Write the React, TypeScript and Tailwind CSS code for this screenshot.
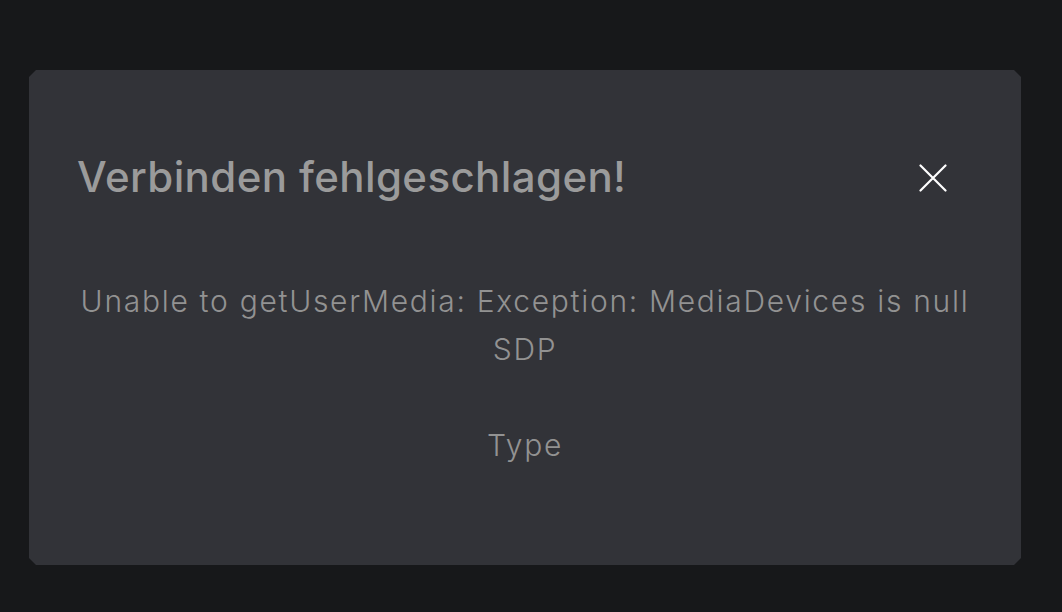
export default function App() {
  return (
    <main className="min-h-screen w-full overflow-hidden bg-[#17181a] pt-[70px] font-['Inter','Liberation_Sans',sans-serif]">
      <section className="ml-[29px] h-[495px] w-[992px] bg-[#323338] px-12 pt-[83px] [clip-path:polygon(7px_0,calc(100%_-_7px)_0,100%_7px,100%_calc(100%_-_7px),calc(100%_-_7px)_100%,7px_100%,0_calc(100%_-_7px),0_7px)]">
        <header className="flex h-12 items-center justify-between">
          <h1 className="text-[42px] leading-[48px] font-medium tracking-[0.4px] text-[#9b9b9b]">
            Verbinden fehlgeschlagen!
          </h1>
          <button className="mr-[24px] mt-[2px] flex h-8 w-8 items-center justify-center text-white">
            <svg width="28" height="28" viewBox="0 0 28 28" fill="none" stroke="currentColor" strokeWidth="2.2" strokeLinecap="round">
              <path d="M1.5 1.5 L26.5 26.5 M26.5 1.5 L1.5 26.5" />
            </svg>
          </button>
        </header>

        <div className="mt-[76px] text-center text-[30px] leading-[48px] font-light tracking-[1.7px] text-[#929292]">
          <p>Unable to getUserMedia: Exception: MediaDevices is null</p>
          <p>SDP</p>
          <p className="mt-12">Type</p>
        </div>
      </section>
    </main>
  );
}
